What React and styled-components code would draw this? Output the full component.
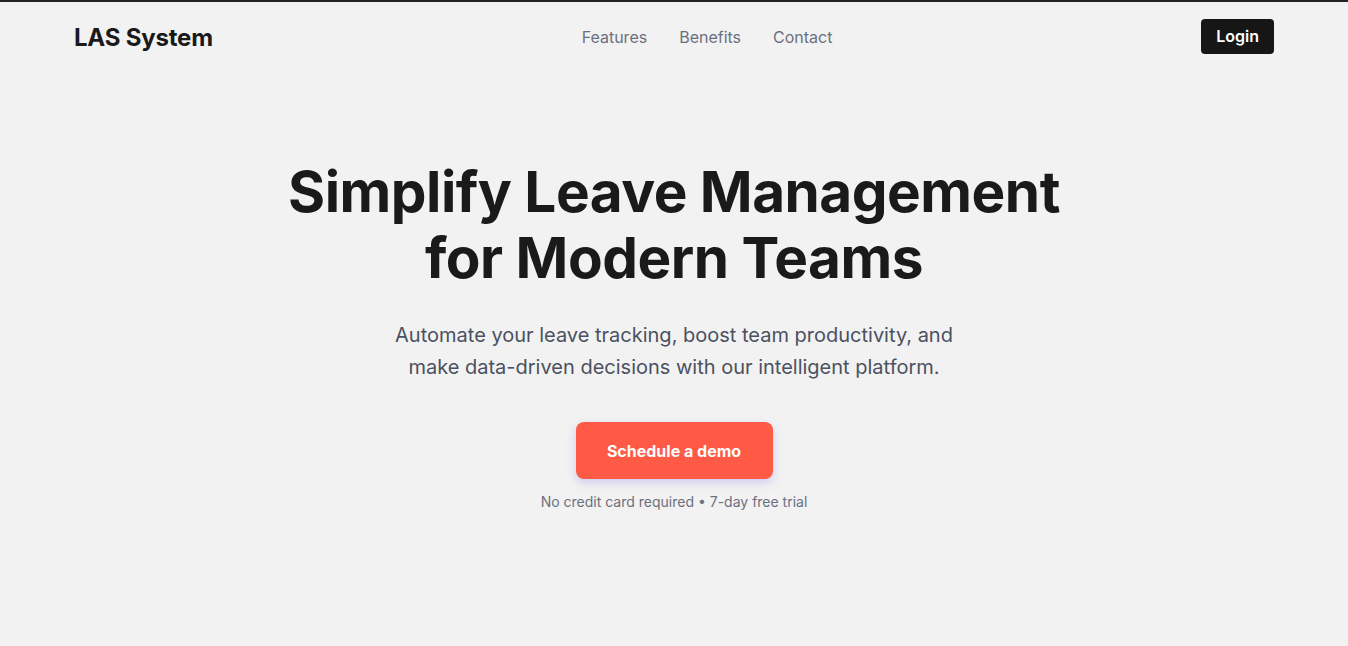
import styled, { createGlobalStyle } from 'styled-components';

const GlobalStyle = createGlobalStyle`
  * {
    box-sizing: border-box;
  }

  body {
    margin: 0;
    background: #f2f2f2;
    font-family: 'Inter', 'Noto Sans', sans-serif;
    color: #1a1a1a;
  }
`;

const Page = styled.div`
  min-height: 646px;
  border-top: 2px solid #222222;
  background: #f2f2f2;
`;

const Nav = styled.header`
  max-width: 1200px;
  margin: 0 auto;
  height: 70px;
  display: flex;
  justify-content: space-between;
  align-items: center;
`;

const Logo = styled.div`
  font-size: 24px;
  font-weight: 700;
  letter-spacing: -0.2px;
  color: #1a1a1a;
`;

const Links = styled.nav`
  display: flex;
  gap: 32px;
`;

const NavLink = styled.a`
  font-size: 16px;
  color: #6b7080;
  text-decoration: none;
`;

const LoginButton = styled.button`
  height: 35px;
  margin-top: -2px;
  padding: 0 15px;
  border: none;
  border-radius: 4px;
  background: #161616;
  color: #ffffff;
  font-family: inherit;
  font-size: 16px;
  font-weight: 600;
`;

const Hero = styled.section`
  display: flex;
  flex-direction: column;
  align-items: center;
  text-align: center;
  padding-top: 87px;
`;

const Title = styled.h1`
  margin: 0;
  font-size: 56.7px;
  line-height: 66px;
  font-weight: 700;
  letter-spacing: -0.5px;
  color: #1a1a1a;
`;

const Subtitle = styled.p`
  margin: 28px 0 0;
  max-width: 600px;
  font-size: 20px;
  line-height: 32px;
  color: #4b5160;
`;

const DemoButton = styled.button`
  margin-top: 39px;
  width: 197px;
  height: 57px;
  border: none;
  border-radius: 8px;
  background: #ff5a45;
  color: #ffffff;
  font-family: inherit;
  font-size: 16px;
  font-weight: 700;
  box-shadow: 0 4px 10px rgba(120, 90, 240, 0.25);
`;

const Note = styled.p`
  margin: 14px 0 0;
  font-size: 14px;
  color: #6b7080;
`;

export default function App() {
  return (
    <Page>
      <GlobalStyle />
      <Nav>
        <Logo>LAS System</Logo>
        <Links>
          <NavLink href="#features">Features</NavLink>
          <NavLink href="#benefits">Benefits</NavLink>
          <NavLink href="#contact">Contact</NavLink>
        </Links>
        <LoginButton>Login</LoginButton>
      </Nav>

      <Hero>
        <Title>
          Simplify Leave Management
          <br />
          for Modern Teams
        </Title>
        <Subtitle>
          Automate your leave tracking, boost team productivity, and make data-driven decisions with our
          intelligent platform.
        </Subtitle>
        <DemoButton>Schedule a demo</DemoButton>
        <Note>No credit card required • 7-day free trial</Note>
      </Hero>
    </Page>
  );
}
